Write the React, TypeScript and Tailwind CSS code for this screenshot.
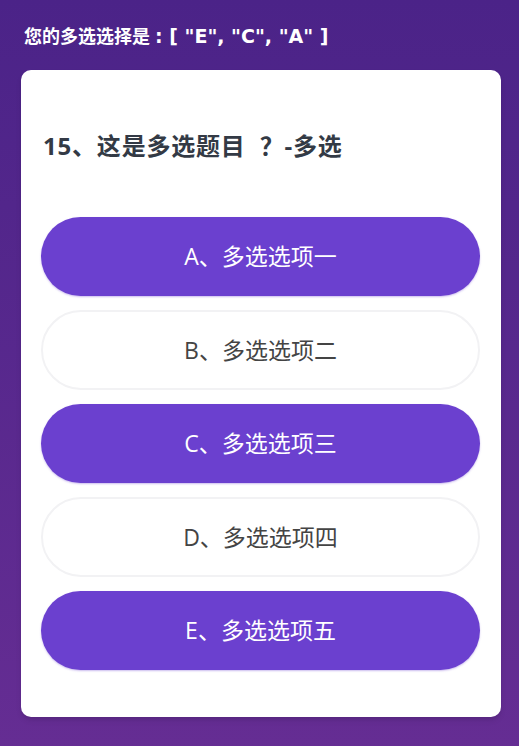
import React from "react";

const options = [
  { key: "A", label: "A、多选选项一", selected: true },
  { key: "B", label: "B、多选选项二", selected: false },
  { key: "C", label: "C、多选选项三", selected: true },
  { key: "D", label: "D、多选选项四", selected: false },
  { key: "E", label: "E、多选选项五", selected: true },
];

export default function App() {
  return (
    <div
      className="min-h-[746px] w-full bg-gradient-to-b from-[#4b2388] to-[#652d93] pl-[21px] pr-[18px] pt-[22px] pb-[31px]"
      style={{ fontFamily: '"Open Sans", "Noto Sans CJK SC", sans-serif' }}
    >
      <div className="flex h-[28px] items-center pl-[3px] text-[18px] font-bold text-white">
        <span>您的多选选择是</span>
        <span className="ml-[5px] whitespace-pre font-['DejaVu_Sans','Noto_Sans_CJK_SC',sans-serif] text-[19px]">: [ "E", "C", "A" ]</span>
      </div>
      <div className="mt-[20px] rounded-[10px] bg-white pl-[20px] pr-[21px] pt-[55px] pb-[47px] shadow-md">
        <div className="pl-[2px] text-[24px] font-bold leading-[40px] tracking-[0.8px] text-[#333a45]">
          15、这是多选题目
          <span className="ml-[14px] inline-block font-['Noto_Sans_CJK_SC',sans-serif]">？</span>
          -多选
        </div>
        <div className="mt-[51px] flex flex-col gap-[14px]">
          {options.map((o) => (
            <div
              key={o.key}
              className={
                o.selected
                  ? "flex h-[79px] items-center justify-center rounded-full bg-[#6b40cf] text-[23px] text-white shadow-[0_1px_2px_rgba(107,64,207,0.35)]"
                  : "flex h-[80px] items-center justify-center rounded-full border-2 border-[#f2f2f4] bg-white text-[23px] text-[#444]"
              }
            >
              {o.label}
            </div>
          ))}
        </div>
      </div>
    </div>
  );
}
